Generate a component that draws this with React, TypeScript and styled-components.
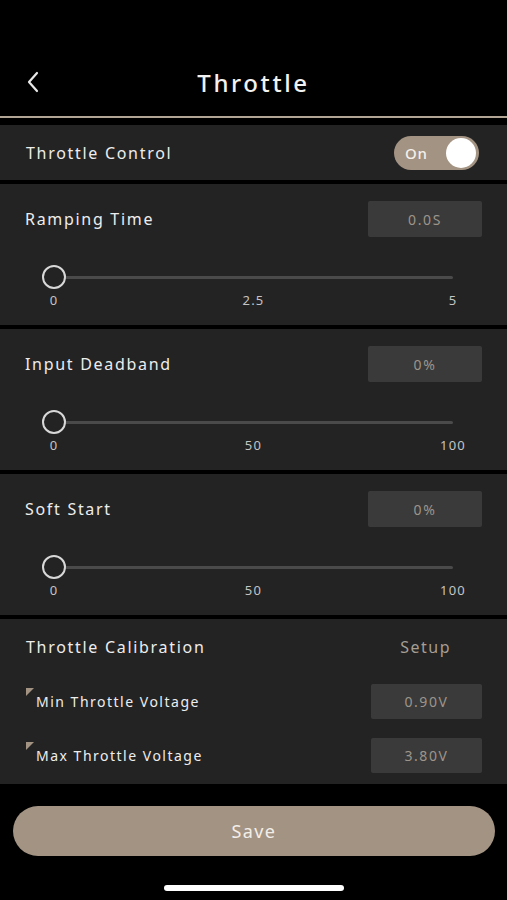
import React, { useState } from "react";
import styled, { createGlobalStyle } from "styled-components";

const tan = "#a39383";
const cardBg = "#232323";
const boxBg = "#3a3a3a";

const GlobalStyle = createGlobalStyle`
  html, body {
    margin: 0;
    padding: 0;
    background: #000;
  }
  body {
    font-family: "Noto Sans", "Liberation Sans", sans-serif;
    color: #ececec;
  }
`;

const Page = styled.div`
  width: 507px;
  height: 900px;
  background: #000;
  display: flex;
  flex-direction: column;
  overflow: hidden;
`;

const StatusSpace = styled.div`
  height: 50px;
`;

const NavBar = styled.div`
  height: 64px;
  display: grid;
  grid-template-columns: 60px 1fr 60px;
  align-items: center;
`;

const BackButton = styled.button`
  background: none;
  border: none;
  padding: 0 0 0 26px;
  display: flex;
  align-items: center;
  cursor: pointer;
`;

const Title = styled.h1`
  margin: 0;
  text-align: center;
  font-size: 24px;
  font-weight: 500;
  letter-spacing: 2.6px;
  color: #f2f2f2;
`;

const Divider = styled.div`
  height: 2px;
  margin-top: 2px;
  background: #b3a595;
`;

const List = styled.div`
  margin-top: 7px;
  display: flex;
  flex-direction: column;
  gap: 4px;
`;

const Card = styled.section<{ $height: number }>`
  background: ${cardBg};
  height: ${({ $height }) => $height}px;
  box-sizing: border-box;
`;

const Row = styled.div<{ $height?: number }>`
  display: flex;
  align-items: center;
  justify-content: space-between;
  height: ${({ $height }) => ($height ? `${$height}px` : "auto")};
`;

const ToggleRow = styled(Row)`
  padding: 0 28px 0 26px;
`;

const Label = styled.span<{ $size?: number }>`
  font-size: ${({ $size }) => $size ?? 16}px;
  letter-spacing: ${({ $size }) => ($size && $size < 16 ? 1.5 : 1.7)}px;
  color: #ededed;
`;

const ToggleTrack = styled.div<{ $on: boolean }>`
  width: 85px;
  height: 34px;
  border-radius: 17px;
  background: ${({ $on }) => ($on ? tan : "#555")};
  display: flex;
  align-items: center;
  justify-content: space-between;
  padding: 0 3px 0 11px;
  box-sizing: border-box;
  cursor: pointer;
`;

const ToggleText = styled.span`
  font-size: 15px;
  font-weight: 500;
  letter-spacing: 0.8px;
  color: #f4f0ea;
`;

const Knob = styled.div`
  width: 30px;
  height: 30px;
  border-radius: 50%;
  background: #fff;
`;

const ValueBox = styled.div<{ $width: number; $height: number }>`
  width: ${({ $width }) => $width}px;
  height: ${({ $height }) => $height}px;
  background: ${boxBg};
  border-radius: 2px;
  display: flex;
  align-items: center;
  justify-content: center;
  font-size: 14px;
  letter-spacing: 1.6px;
  color: #9d958b;
`;

const SliderCard = styled(Card)`
  padding: 17px 25px 0 25px;
`;

const SliderArea = styled.div`
  margin: 28px 17px 0 17px;
  width: 423px;
`;

const TrackWrap = styled.div`
  position: relative;
  height: 24px;
  display: flex;
  align-items: center;
`;

const TrackLine = styled.div`
  height: 3px;
  margin: 0 12px;
  flex: 1;
  border-radius: 2px;
  background: #4a4a4a;
`;

const Thumb = styled.div`
  position: absolute;
  top: 0;
  width: 24px;
  height: 24px;
  box-sizing: border-box;
  border-radius: 50%;
  border: 2px solid #d8d8d8;
  background: ${cardBg};
`;

const Ticks = styled.div`
  margin-top: 2px;
  display: grid;
  grid-template-columns: 24px 1fr 24px;
`;

const Tick = styled.span`
  display: flex;
  justify-content: center;
  font-size: 13px;
  letter-spacing: 1.2px;
  color: #c4c4c4;
`;

const CalibCard = styled(Card)`
  padding: 10px 25px 10px 26px;
  display: flex;
  flex-direction: column;
  gap: 19px;
`;

const SetupLink = styled.span`
  margin-right: 31px;
  font-size: 16px;
  letter-spacing: 1.5px;
  color: #a59e95;
`;

const SubLabel = styled.div`
  display: flex;
  align-items: flex-start;
`;

const Corner = styled.div`
  width: 0;
  height: 0;
  margin-top: -4px;
  margin-right: 2px;
  border-top: 8px solid ${tan};
  border-right: 8px solid transparent;
`;

const Footer = styled.div`
  margin-top: auto;
  padding: 0 12px 9px 13px;
  display: flex;
  flex-direction: column;
  align-items: center;
`;

const SaveButton = styled.button`
  width: 100%;
  height: 50px;
  border: none;
  border-radius: 25px;
  background: ${tan};
  color: #f3eee8;
  font-family: inherit;
  font-size: 18px;
  letter-spacing: 1.4px;
  cursor: pointer;
`;

const HomeBar = styled.div`
  margin-top: 29px;
  width: 180px;
  height: 6px;
  border-radius: 3px;
  background: #fff;
`;

type SliderProps = {
  label: string;
  value: string;
  ticks: [string, string, string];
  ratio: number;
};

const SliderSetting: React.FC<SliderProps> = ({ label, value, ticks, ratio }) => (
  <SliderCard $height={141}>
    <Row>
      <Label>{label}</Label>
      <ValueBox $width={114} $height={36}>
        {value}
      </ValueBox>
    </Row>
    <SliderArea>
      <TrackWrap>
        <TrackLine />
        <Thumb style={{ left: `calc(${ratio * 100}% - ${ratio * 24}px)` }} />
      </TrackWrap>
      <Ticks>
        {ticks.map((t) => (
          <Tick key={t}>{t}</Tick>
        ))}
      </Ticks>
    </SliderArea>
  </SliderCard>
);

const App: React.FC = () => {
  const [on, setOn] = useState(true);

  return (
    <Page>
      <GlobalStyle />
      <StatusSpace />
      <NavBar>
        <BackButton aria-label="Back">
          <svg width="14" height="22" viewBox="0 0 14 22" fill="none">
            <path d="M11 2 L3 11 L11 20" stroke="#e8e8e8" strokeWidth="2.2" strokeLinecap="round" strokeLinejoin="round" />
          </svg>
        </BackButton>
        <Title>Throttle</Title>
        <span />
      </NavBar>
      <Divider />
      <List>
        <Card $height={55}>
          <ToggleRow $height={55}>
            <Label>Throttle Control</Label>
            <ToggleTrack $on={on} onClick={() => setOn((v) => !v)}>
              <ToggleText>{on ? "On" : "Off"}</ToggleText>
              <Knob />
            </ToggleTrack>
          </ToggleRow>
        </Card>
        <SliderSetting label="Ramping Time" value="0.0S" ticks={["0", "2.5", "5"]} ratio={0} />
        <SliderSetting label="Input Deadband" value="0%" ticks={["0", "50", "100"]} ratio={0} />
        <SliderSetting label="Soft Start" value="0%" ticks={["0", "50", "100"]} ratio={0} />
        <CalibCard $height={165}>
          <Row $height={36}>
            <Label>Throttle Calibration</Label>
            <SetupLink>Setup</SetupLink>
          </Row>
          <Row $height={35}>
            <SubLabel>
              <Corner />
              <Label $size={14}>Min Throttle Voltage</Label>
            </SubLabel>
            <ValueBox $width={111} $height={35}>
              0.90V
            </ValueBox>
          </Row>
          <Row $height={35}>
            <SubLabel>
              <Corner />
              <Label $size={14}>Max Throttle Voltage</Label>
            </SubLabel>
            <ValueBox $width={111} $height={35}>
              3.80V
            </ValueBox>
          </Row>
        </CalibCard>
      </List>
      <Footer>
        <SaveButton>Save</SaveButton>
        <HomeBar />
      </Footer>
    </Page>
  );
};

export default App;
